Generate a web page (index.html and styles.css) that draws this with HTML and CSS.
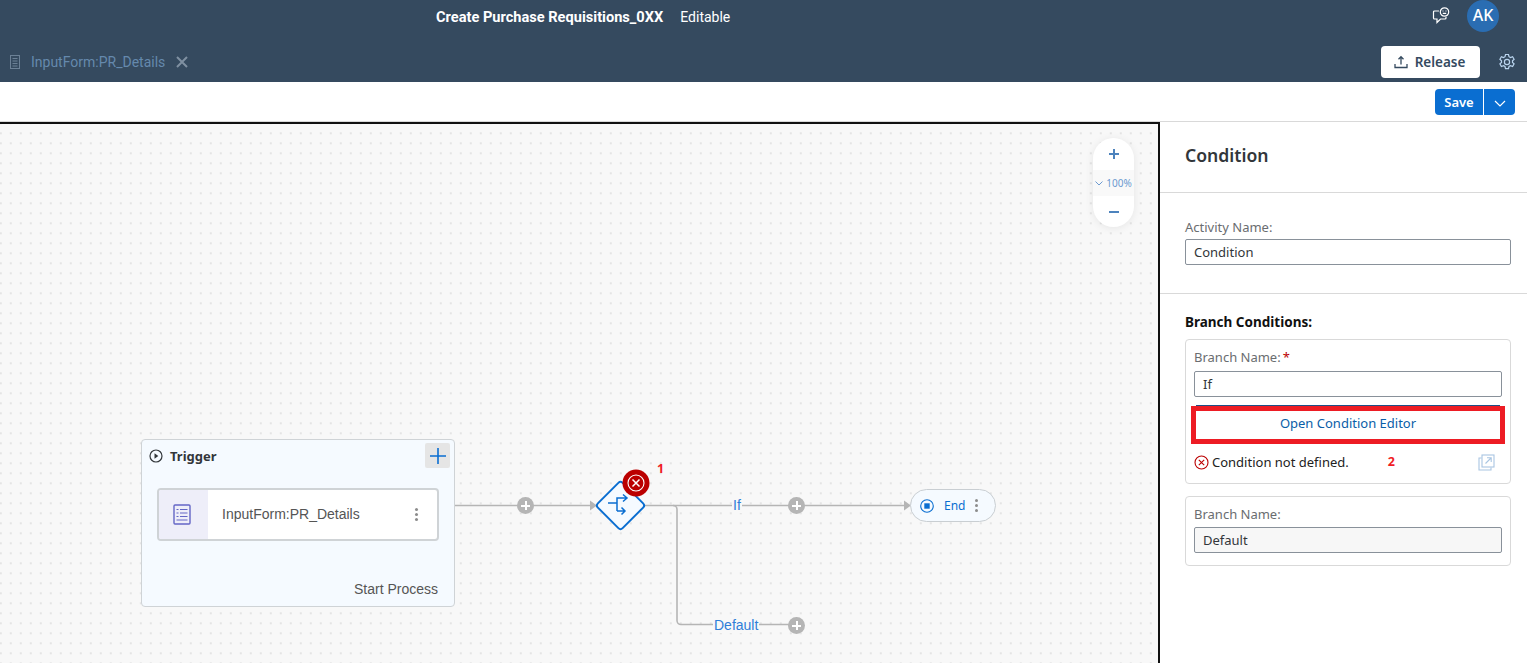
FILE: index.html
```html
<!DOCTYPE html>
<html lang="en">
<head>
    <meta charset="UTF-8">
    <meta name="viewport" content="width=device-width, initial-scale=1.0">
    <title>Create Purchase Requisitions_0XX</title>
    <link rel="stylesheet" href="styles.css">
</head>
<body>
    <header class="app-header">
        <div class="title-row">
            <span class="project-title">Create Purchase Requisitions_0XX</span>
            <span class="project-state">Editable</span>
            <div class="title-actions">
                <svg class="feedback-icon" width="18" height="18" viewBox="0 0 18 18" fill="none" stroke="#fff" stroke-width="1.2">
                    <path d="M7 4H2.5A1 1 0 0 0 1.5 5v6a1 1 0 0 0 1 1H5v3.5L8.5 12H13a1 1 0 0 0 1-1v-1"/>
                    <circle cx="12.5" cy="5" r="4.2"/>
                    <path d="M10.5 4h1M13.5 4h1M10.8 6.4h3.4"/>
                </svg>
                <div class="avatar">AK</div>
            </div>
        </div>
        <div class="tab-row">
            <svg class="tab-icon" width="12" height="14" viewBox="0 0 12 14" fill="none" stroke="#6c8196">
                <rect x="1.5" y="0.5" width="9" height="13"/>
                <path d="M3.5 3.5h5M3.5 6h5M3.5 8.5h5M3.5 11h5"/>
            </svg>
            <span class="tab-name">InputForm:PR_Details</span>
            <svg class="tab-close" width="12" height="12" viewBox="0 0 12 12" stroke="#7f90a1" stroke-width="2">
                <path d="M1 1l10 10M11 1L1 11"/>
            </svg>
            <button class="release-btn">
                <svg width="14" height="14" viewBox="0 0 14 14" fill="none" stroke="#354a5f" stroke-width="1.3">
                    <path d="M7 9.5V2M4.5 4.2L7 1.7l2.5 2.5M1 9v3.5h12V9"/>
                </svg>
                Release
            </button>
            <svg class="gear-icon" width="18" height="18" viewBox="0 0 18 18" fill="none" stroke="#b9d4ee" stroke-width="1.2">
                <path d="M7.5 1.5h3l.5 2.2 1.5.8 2.1-.8 1.5 2.6-1.6 1.5v1.6l1.6 1.5-1.5 2.6-2.1-.8-1.5.8-.5 2.2h-3l-.5-2.2-1.5-.8-2.1.8-1.5-2.6 1.6-1.5V7.8L1.9 6.3l1.5-2.6 2.1.8 1.5-.8z"/>
                <circle cx="9" cy="9" r="2.6"/>
            </svg>
        </div>
    </header>

    <div class="toolbar">
        <div class="save-group">
            <button class="save-btn">Save</button>
            <button class="save-arrow">
                <svg width="12" height="7" viewBox="0 0 12 7" fill="none" stroke="#fff" stroke-width="1.2"><path d="M1 1l5 5 5-5"/></svg>
            </button>
        </div>
    </div>

    <main class="workspace">
        <section class="canvas">
            <svg class="links" width="1160" height="540" viewBox="0 0 1160 540" fill="none">
                <g stroke="#b5b5b5" stroke-width="1.6">
                    <path d="M455 381.500H592"/>
                    <path d="M640 381.500H906"/>
                    <path d="M673 381.500a4 4 0 0 1 4 4v111a4 4 0 0 0 4 4h115"/>
                </g>
                <path d="M590 376.500l7 5-7 5z" fill="#b5b5b5"/>
                <path d="M904 376.500l7 5-7 5z" fill="#b5b5b5"/>
            </svg>

            <div class="zoom-box">
                <svg width="12" height="12" viewBox="0 0 12 12" stroke="#4d83bd" stroke-width="2"><path d="M6 1v10M1 6h10"/></svg>
                <div class="zoom-level">
                    <svg width="8" height="5" viewBox="0 0 8 5" fill="none" stroke="#6c9ad0"><path d="M.5.5L4 4 7.5.5"/></svg>
                    100%
                </div>
                <svg width="12" height="12" viewBox="0 0 12 12" stroke="#4d83bd" stroke-width="2"><path d="M1 6h10"/></svg>
            </div>

            <div class="trigger">
                <div class="trigger-head">
                    <svg width="14" height="14" viewBox="0 0 14 14" fill="none" stroke="#32363a" stroke-width="1.2">
                        <circle cx="7" cy="7" r="6"/>
                        <path d="M5.5 4.3L9.3 7l-3.8 2.7z" fill="#32363a" stroke="none"/>
                    </svg>
                    <span class="trigger-title">Trigger</span>
                    <div class="trigger-add">
                        <svg width="16" height="16" viewBox="0 0 16 16" stroke="#0a6ed1" stroke-width="1.6"><path d="M8 0v16M0 8h16"/></svg>
                    </div>
                </div>
                <div class="form-card">
                    <div class="form-card-icon">
                        <svg width="18" height="21" viewBox="0 0 18 21" fill="none" stroke="#6466c6" stroke-width="1.400">
                            <rect x="1" y="1" width="16" height="19" rx="1"/>
                            <path d="M3.500 5.500h2M7 5.500h7.500M3.500 9h2M7 9h7.500M3.500 12.500h2M7 12.500h7.500M3.500 16h11" stroke-width="1.100"/>
                        </svg>
                    </div>
                    <span class="form-card-name">InputForm:PR_Details</span>
                    <div class="dots"><i></i><i></i><i></i></div>
                </div>
                <div class="trigger-foot">Start Process</div>
            </div>

            <div class="plus-dot at-first"></div>
            <div class="plus-dot at-if"></div>
            <div class="plus-dot at-default"></div>

            <div class="gateway"></div>
            <svg class="gateway-icon" width="30" height="30" viewBox="0 0 30 30" fill="none" stroke="#0a6ed1" stroke-width="1.500">
                <path d="M3 12h9M12 20V7h10M18 3.500L22 7l-4 3.500M12 20h8M16.500 16.500L20 20l-3.500 3.500"/>
            </svg>
            <svg class="gateway-error" width="28" height="28" viewBox="0 0 28 28" fill="none">
                <circle cx="14" cy="14" r="13.500" fill="#bb0000"/>
                <circle cx="14" cy="14" r="8" stroke="#fff" stroke-width="1.100"/>
                <path d="M10.500 10.500l7 7M17.500 10.500l-7 7" stroke="#fff" stroke-width="1.500"/>
            </svg>
            <span class="callout at-gateway">1</span>

            <span class="branch-label at-if-label">If</span>
            <span class="branch-label at-default-label">Default</span>

            <div class="end-node">
                <svg width="14" height="14" viewBox="0 0 14 14" fill="none">
                    <circle cx="7" cy="7" r="6.300" stroke="#0a6ed1" stroke-width="1.100"/>
                    <rect x="4.300" y="4.300" width="5.400" height="5.400" fill="#0a6ed1"/>
                </svg>
                <span class="end-text">End</span>
                <div class="dots"><i></i><i></i><i></i></div>
            </div>
        </section>

        <aside class="panel">
            <h2 class="panel-title">Condition</h2>
            <div class="panel-section activity">
                <label class="field-label">Activity Name:</label>
                <div class="field">Condition</div>
            </div>
            <div class="panel-section branches">
                <h3 class="branches-title">Branch Conditions:</h3>
                <div class="branch-box">
                    <label class="field-label required-label">Branch Name:<span class="required">*</span></label>
                    <div class="field">If</div>
                    <button class="editor-btn">Open Condition Editor</button>
                    <div class="error-row">
                        <svg width="15" height="15" viewBox="0 0 15 15" fill="none" stroke="#bb0000" stroke-width="1.100">
                            <circle cx="7.500" cy="7.500" r="6.500"/>
                            <path d="M4.800 4.800l5.400 5.400M10.200 4.800l-5.400 5.400"/>
                        </svg>
                        <span class="error-text">Condition not defined.</span>
                        <span class="callout at-error">2</span>
                        <svg class="open-icon" width="17" height="17" viewBox="0 0 17 17" fill="none" stroke="#a9c5e2" stroke-width="1.100">
                            <path d="M3.500 4H1v12h12v-2.500"/>
                            <rect x="4" y="1" width="12" height="12"/>
                            <path d="M7.500 9.500L13 4M9 3.800h4.200V8"/>
                        </svg>
                    </div>
                </div>
                <div class="branch-box">
                    <label class="field-label">Branch Name:</label>
                    <div class="field readonly">Default</div>
                </div>
            </div>
        </aside>
    </main>
</body>
</html>
```

FILE: styles.css
```css
/* Page */
html, body {
    height: 663px;
    overflow: hidden;
}

body {
    margin: 0;
    font-family: "Noto Sans", Arial, sans-serif;
    font-size: 13px;
    color: #32363a;
    background: #fff;
}

button {
    font-family: inherit;
    cursor: pointer;
}

/* Header */
.app-header {
    height: 82px;
    background: #354a5f;
}

.title-row {
    height: 42px;
    display: flex;
    align-items: flex-start;
    padding-left: 436px;
    padding-right: 28px;
    box-sizing: border-box;
    color: #fff;
    font-family: Roboto, "Liberation Sans", sans-serif;
}

.project-title {
    font-size: 14.600px;
    font-weight: bold;
    line-height: 34px;
}

.project-state {
    font-size: 14px;
    line-height: 34px;
    margin-left: 17px;
}

.title-actions {
    margin-left: auto;
    display: flex;
    align-items: center;
    gap: 17px;
}

.avatar {
    width: 32px;
    height: 32px;
    border-radius: 50%;
    background: #2a6db2;
    color: #fff;
    font-family: "Noto Sans", sans-serif;
    font-size: 16px;
    font-weight: 500;
    line-height: 30px;
    text-align: center;
}

.tab-row {
    height: 40px;
    display: flex;
    align-items: center;
    padding-left: 9px;
    padding-right: 11px;
}

.tab-name {
    margin-left: 10px;
    margin-top: -1px;
    color: #6589ad;
    font-family: Roboto, "Liberation Sans", sans-serif;
    font-size: 14px;
}

.tab-close {
    margin-left: 11px;
}

.release-btn {
    margin-left: auto;
    width: 99px;
    height: 32px;
    display: flex;
    align-items: center;
    justify-content: center;
    gap: 7px;
    padding: 0 2px 0 0;
    background: #fff;
    color: #354a5f;
    border: none;
    border-radius: 4px;
    font-size: 13.500px;
    font-weight: 600;
}

.gear-icon {
    margin-left: 18px;
}

/* Toolbar */
.toolbar {
    height: 40px;
    display: flex;
    align-items: center;
    justify-content: flex-end;
    padding-right: 12px;
    border-bottom: 1px solid #d9d9d9;
    box-sizing: border-box;
}

.save-group {
    display: flex;
    height: 26px;
    margin-top: 1px;
}

.save-btn, .save-arrow {
    border: none;
    background: #0a6ed1;
    color: #fff;
    font-size: 13px;
    font-weight: 600;
    padding: 0;
}

.save-btn {
    width: 48px;
    border-radius: 4px 0 0 4px;
}

.save-arrow {
    width: 31px;
    margin-left: 1px;
    border-radius: 0 4px 4px 0;
}

/* Workspace */
.workspace {
    display: flex;
    height: 541px;
}

.canvas {
    position: relative;
    width: 1158px;
    flex: none;
    border-top: 2px solid #111;
    border-right: 2px solid #111;
    background-color: #f8f8f8;
    background-image: radial-gradient(circle, #e4e4e4 1px, transparent 1.200px);
    background-size: 10px 10px;
    background-position: 5.800px 4.300px;
    overflow: hidden;
}

.links {
    position: absolute;
    left: 0;
    top: 0;
}

/* Zoom control */
.zoom-box {
    position: absolute;
    left: 1093px;
    top: 14px;
    width: 41px;
    height: 89px;
    border-radius: 21px;
    background: #fff;
    box-shadow: 0 1px 8px rgba(0, 0, 0, 0.08);
    display: flex;
    flex-direction: column;
    align-items: center;
    justify-content: space-between;
    padding: 10px 0 9px;
    box-sizing: border-box;
}

.zoom-level {
    width: 100%;
    height: 26px;
    background: #f9f9f9;
    color: #6c9ad0;
    font-size: 10px;
    display: flex;
    align-items: center;
    justify-content: center;
    gap: 3px;
}

/* Trigger node */
.trigger {
    position: absolute;
    left: 141px;
    top: 315px;
    width: 314px;
    height: 168px;
    box-sizing: border-box;
    background: #f5faff;
    border: 1px solid #cfd3d6;
    border-radius: 4px;
    padding: 3px 4px 0 7px;
}

.trigger-head {
    display: flex;
    align-items: center;
    height: 25px;
}

.trigger-title {
    margin-left: 7px;
    font-weight: 700;
    font-size: 13px;
}

.trigger-add {
    margin-left: auto;
    width: 25px;
    height: 25px;
    background: #e5e5e5;
    border-radius: 2px;
    display: flex;
    align-items: center;
    justify-content: center;
}

.form-card {
    margin: 20px 11px 0 8px;
    height: 53px;
    box-sizing: border-box;
    display: flex;
    align-items: center;
    background: #fff;
    border: 2px solid #cfd3d6;
    border-radius: 4px;
    overflow: hidden;
}

.form-card-icon {
    width: 45px;
    height: 100%;
    padding-right: 4px;
    background: #eeeef9;
    display: flex;
    align-items: center;
    justify-content: center;
}

.form-card-name {
    margin-left: 14px;
    margin-top: -2px;
    font-family: "Liberation Sans", Arial, sans-serif;
    font-size: 14px;
    color: #555;
}

.form-card .dots {
    margin-left: auto;
    margin-right: 19px;
}

.dots {
    display: flex;
    flex-direction: column;
    gap: 2px;
}

.dots i {
    width: 3px;
    height: 3px;
    border-radius: 50%;
    background: #8c8c8c;
}

.trigger-foot {
    margin-top: 40px;
    margin-right: 12px;
    text-align: right;
    font-family: "Liberation Sans", Arial, sans-serif;
    font-size: 14px;
    color: #555;
}

/* Small add dots on the links */
.plus-dot {
    position: absolute;
    width: 17px;
    height: 17px;
    border-radius: 50%;
    background-color: #b5b5b5;
    background-image: linear-gradient(#fff, #fff), linear-gradient(#fff, #fff);
    background-size: 9px 2px, 2px 9px;
    background-position: center;
    background-repeat: no-repeat;
}

.at-first { left: 517px; top: 373px; }
.at-if { left: 788px; top: 373px; }
.at-default { left: 788px; top: 493px; }

/* Gateway */
.gateway {
    position: absolute;
    left: 602px;
    top: 363px;
    width: 37px;
    height: 37px;
    box-sizing: border-box;
    background: #f5faff;
    border: 2px solid #0a6ed1;
    border-radius: 4px;
    transform: rotate(45deg);
}

.gateway-icon {
    position: absolute;
    left: 605px;
    top: 367px;
}

.gateway-error {
    position: absolute;
    left: 622px;
    top: 345px;
}

.callout {
    color: #f01c24;
    font-size: 12.500px;
    font-weight: 700;
}

.at-gateway {
    position: absolute;
    left: 657px;
    top: 336px;
}

.branch-label {
    position: absolute;
    padding: 0 1px;
    background: #f8f8f8;
    color: #2f7ed8;
    font-family: "Liberation Sans", Arial, sans-serif;
    font-size: 14px;
    line-height: 16px;
}

.at-if-label { left: 732px; top: 373px; }
.at-default-label { left: 713px; top: 493px; }

/* End node */
.end-node {
    position: absolute;
    left: 910px;
    top: 365px;
    width: 86px;
    height: 33px;
    box-sizing: border-box;
    background: #f5faff;
    border: 1px solid #c9ced2;
    border-radius: 17px;
    display: flex;
    align-items: center;
    padding-left: 9px;
}

.end-text {
    margin-left: 10px;
    color: #0a6ed1;
    font-size: 12px;
}

.end-node .dots {
    margin-left: 10px;
}

/* Right panel */
.panel {
    flex: 1;
    min-width: 0;
}

.panel-title {
    margin: 0;
    height: 71px;
    box-sizing: border-box;
    padding: 21px 25px 0;
    font-size: 17.600px;
    line-height: 24px;
    font-weight: 600;
    border-bottom: 1px solid #d9d9d9;
}

.panel-section {
    padding: 0 16px 0 25px;
}

.activity {
    height: 101px;
    padding-top: 25px;
    box-sizing: border-box;
    border-bottom: 1px solid #d9d9d9;
}

.field-label {
    display: block;
    color: #6a6d70;
    font-size: 13px;
    line-height: 18px;
    margin-bottom: 3px;
}

.branch-box .field-label {
    margin-bottom: 4px;
}

.branch-box .required-label {
    margin-bottom: 5px;
}

.required {
    color: #bb0000;
    margin-left: 2px;
}

.field {
    height: 26px;
    box-sizing: border-box;
    border: 1px solid #89919a;
    border-radius: 2px;
    background: #fff;
    padding-left: 8px;
    font-size: 13px;
    line-height: 24px;
}

.field.readonly {
    background: #f7f7f7;
}

.branches-title {
    margin: 19px 0 8px;
    font-size: 13.500px;
    line-height: 18px;
    font-weight: 700;
    color: #111;
}

.branch-box {
    border: 1px solid #d9d9d9;
    border-radius: 4px;
    padding: 8px 8px 3px;
    margin-bottom: 12px;
    box-sizing: border-box;
}

.branch-box:last-child {
    height: 70px;
}

.editor-btn {
    display: block;
    width: 314px;
    height: 38px;
    margin: 9px 0 0 -3px;
    background: #fff;
    border: 5px solid #ed1c24;
    box-shadow: 0 -6px 0 -5px #1d4f86;
    color: #0a5ea8;
    font-size: 13px;
    padding: 0 0 4px;
}

.error-row {
    display: flex;
    align-items: center;
    height: 36px;
    color: #222;
}

.error-text {
    margin-left: 3px;
}

.at-error {
    margin-left: 39px;
    margin-bottom: 2px;
}

.open-icon {
    margin-left: auto;
    margin-right: 7px;
}
```
